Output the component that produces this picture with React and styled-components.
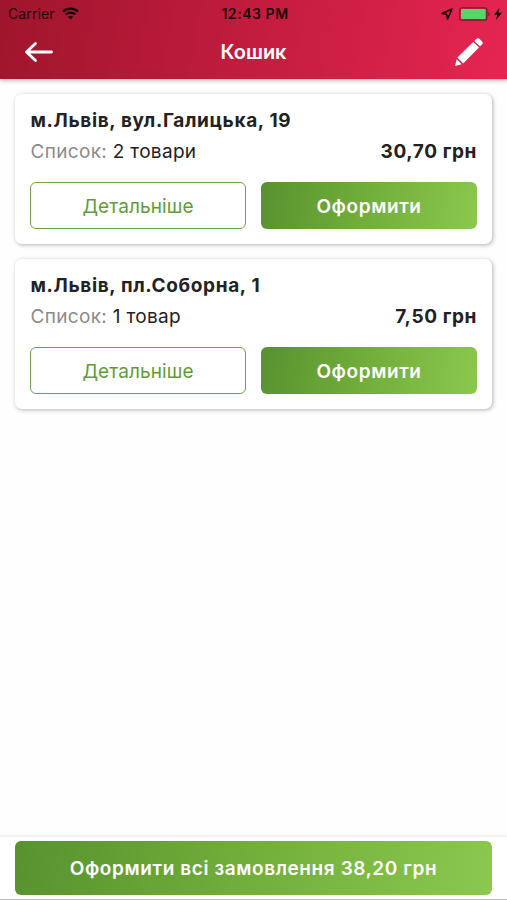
import React from 'react';
import styled, { createGlobalStyle } from 'styled-components';

const GlobalStyle = createGlobalStyle`
  * {
    box-sizing: border-box;
  }
  body {
    margin: 0;
    background: #fefefe;
    color: #222;
    font-family: Inter, "Liberation Sans", sans-serif;
  }
  button {
    font-family: inherit;
    cursor: pointer;
  }
`;

const green = 'linear-gradient(100deg, #57922f 0%, #70ac39 45%, #8bc84e 100%)';

const Screen = styled.div`
  display: flex;
  flex-direction: column;
  height: 900px;
  overflow: hidden;
`;

const Header = styled.header`
  height: 79px;
  flex-shrink: 0;
  background: linear-gradient(100deg, #9f152c 0%, #c31c3e 50%, #e62552 100%);
  box-shadow: 0 1px 5px rgba(0, 0, 0, 0.35);
`;

const StatusBar = styled.div`
  display: grid;
  grid-template-columns: 1fr auto 1fr;
  align-items: center;
  height: 27px;
  padding: 0 5px 0 8px;
  color: #1c0308;
`;

const StatusGroup = styled.div`
  display: flex;
  align-items: center;
`;

const StatusIcons = styled(StatusGroup)`
  justify-content: flex-end;
  gap: 4px;
`;

const Carrier = styled.span`
  margin-right: 7px;
  font-size: 14px;
  letter-spacing: 0.1px;
`;

const Clock = styled.span`
  font-size: 14px;
  font-weight: 600;
  letter-spacing: 0.55px;
`;

const NavBar = styled.div`
  display: grid;
  grid-template-columns: 1fr auto 1fr;
  align-items: center;
  height: 50px;
  padding: 0 24px;
`;

const Title = styled.h1`
  margin: 0;
  color: #fff;
  font-size: 20px;
  font-weight: 600;
`;

const IconButton = styled.button`
  display: flex;
  justify-self: ${props => props.$end ? 'end' : 'start'};
  padding: 0;
  border: 0;
  background: none;
`;

const List = styled.main`
  display: flex;
  flex: 1;
  flex-direction: column;
  gap: 15px;
  padding: 15px 15px 0;
`;

const Card = styled.section`
  height: 150px;
  padding: 15px 15px 14px;
  border-radius: 7px;
  background: #fff;
  box-shadow: 1px 1px 4px rgba(0, 0, 0, 0.3);
`;

const Address = styled.h2`
  margin: 0;
  padding-left: 0.5px;
  font-size: 19px;
  font-weight: 700;
  line-height: 24px;
  letter-spacing: 0.65px;
`;

const Summary = styled.div`
  display: flex;
  justify-content: space-between;
  margin-top: 6px;
  padding-left: 0.5px;
  font-size: 19px;
  line-height: 26px;
  letter-spacing: 0.32px;
`;

const Label = styled.span`
  color: #8b8b8b;
`;

const Price = styled.span`
  font-weight: 700;
  letter-spacing: 0.6px;
`;

const Actions = styled.div`
  display: flex;
  gap: 15px;
  margin-top: 17px;
`;

const Button = styled.button`
  flex: 1 1 50%;
  height: 47px;
  padding: 1px 0 0;
  border: ${props => props.$outline ? '1.5px solid #6da544' : '0'};
  border-radius: 6px;
  background: ${props => props.$outline ? '#fff' : green};
  color: ${props => props.$outline ? '#629c39' : '#fff'};
  font-size: 19px;
  font-weight: ${props => props.$outline ? 400 : 600};
  letter-spacing: ${props => props.$outline ? '0.1px' : '0.6px'};
`;

const Footer = styled.footer`
  display: flex;
  height: 64px;
  flex-shrink: 0;
  padding: 4px 15px;
  border-top: 1px solid #f0f0f0;
  border-bottom: 1px solid #b9b9b9;
  background: #fff;
  box-shadow: 0 -1px 2px rgba(0, 0, 0, 0.06);
`;

const CheckoutAll = styled(Button)`
  height: 54px;
`;

const WifiIcon = () => (
  <svg width="17" height="13" viewBox="0 0 17 13" fill="none" stroke="currentColor" strokeWidth="2.3">
    <path d="M1 4.6C5.2.6 11.8.6 16 4.6" />
    <path d="M3.7 7.5c2.7-2.500 6.900-2.500 9.600 0" />
    <path d="M8.500 12.500 5.900 9.800c1.500-1.300 3.700-1.300 5.200 0z" fill="currentColor" stroke="none" />
  </svg>
);

const LocationIcon = () => (
  <svg width="14" height="12" viewBox="0 0 14 12" fill="none" stroke="currentColor" strokeWidth="1.6" strokeLinejoin="round">
    <path d="M11 1 1 5.400l4.700.900.900 4.700z" />
  </svg>
);

const BatteryIcon = () => (
  <svg width="31" height="14" viewBox="0 0 31 14">
    <rect x=".8" y=".8" width="27" height="12.400" rx="2" fill="none" stroke="#84152d" strokeWidth="1.300" />
    <rect x="2" y="2" width="24.600" height="10" rx="1" fill="#53d769" />
    <path d="M29.300 5v4c1-.4 1.400-1.200 1.400-2s-.4-1.600-1.400-2z" fill="#84152d" />
  </svg>
);

const BoltIcon = () => (
  <svg width="8" height="12" viewBox="0 0 8 12" fill="currentColor">
    <path d="M5.500 0 0 6.800h3.300L1.900 12 8 4.800H4.500z" />
  </svg>
);

const BackIcon = () => (
  <svg width="30" height="22" viewBox="0 0 30 22" fill="none" stroke="#fff" strokeWidth="2.8" strokeLinecap="round" strokeLinejoin="round">
    <path d="M27.500 11H2.500M11.500 2.500 2.500 11l9 8.500" />
  </svg>
);

const PencilIcon = () => (
  <svg width="28" height="28" viewBox="0 0 28 28" fill="#fff">
    <path d="m0 28 1.700-6.800 4.900 5z" />
    <path d="M2.300 19.600 18.300 3.900l5.700 5.700L8.200 25.600z" />
    <path d="m19.300 2.900 2-2c1.100-1.100 2.400-.9 3.400.1l2.200 2.200c1 1 1.100 2.300.1 3.300l-2 2.100z" />
  </svg>
);

const orders = [
  { id: 1, address: 'м.Львів, вул.Галицька, 19', count: '2 товари', price: '30,70 грн' },
  { id: 2, address: 'м.Львів, пл.Соборна, 1', count: '1 товар', price: '7,50 грн' }
];

const Order = ({ address, count, price }) => (
  <Card>
    <Address>{address}</Address>
    <Summary>
      <span><Label>Список:</Label> {count}</span>
      <Price>{price}</Price>
    </Summary>
    <Actions>
      <Button $outline>Детальніше</Button>
      <Button>Оформити</Button>
    </Actions>
  </Card>
);

const App = () => (
  <Screen>
    <GlobalStyle />
    <Header>
      <StatusBar>
        <StatusGroup>
          <Carrier>Carrier</Carrier>
          <WifiIcon />
        </StatusGroup>
        <Clock>12:43 PM</Clock>
        <StatusIcons>
          <LocationIcon />
          <BatteryIcon />
          <BoltIcon />
        </StatusIcons>
      </StatusBar>
      <NavBar>
        <IconButton aria-label="Назад"><BackIcon /></IconButton>
        <Title>Кошик</Title>
        <IconButton $end aria-label="Редагувати"><PencilIcon /></IconButton>
      </NavBar>
    </Header>
    <List>
      {orders.map(order => <Order key={order.id} {...order} />)}
    </List>
    <Footer>
      <CheckoutAll>Оформити всі замовлення 38,20 грн</CheckoutAll>
    </Footer>
  </Screen>
);

export default App;
